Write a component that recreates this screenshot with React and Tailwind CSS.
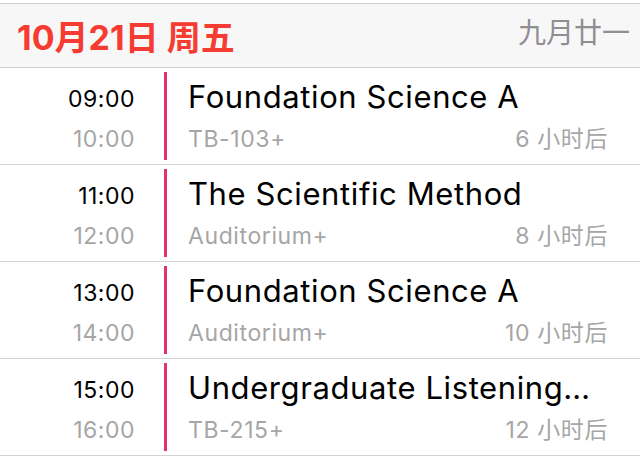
import React from "react";

const rows = [
  { s: "09:00", e: "10:00", t: "Foundation Science A", loc: "TB-103+", rel: "6 小时后" },
  { s: "11:00", e: "12:00", t: "The Scientific Method", loc: "Auditorium+", rel: "8 小时后" },
  { s: "13:00", e: "14:00", t: "Foundation Science A", loc: "Auditorium+", rel: "10 小时后" },
  { s: "15:00", e: "16:00", t: "Undergraduate Listening…", loc: "TB-215+", rel: "12 小时后" },
];

export default function App() {
  return (
    <div
      className="w-[640px] h-[457px] bg-white overflow-hidden"
      style={{ fontFamily: 'Inter, "Noto Sans CJK SC", sans-serif' }}
    >
      <div className="mt-[3px] h-[65px] border-y border-[#d0d0d4] bg-[#f7f7f7] flex justify-between px-[17px]">
        <div className="pt-[13px] text-[34px] leading-[42px] font-bold text-[#f63c32] tracking-[0px]">
          10月21日 周五
        </div>
        <div className="pt-[9px] text-[28px] leading-[40px] text-[#8e8e93] mr-[-7px]">
          九月廿一
        </div>
      </div>
      {rows.map((r, i) => (
        <div key={i} className="h-[97px] border-b border-[#d4d4d8] flex">
          <div className="w-[135px] shrink-0 flex flex-col items-end pt-[15px]">
            <div className="h-[32px] leading-[32px] text-[23px] tracking-[0.5px] text-black">{r.s}</div>
            <div className="mt-[8px] h-[32px] leading-[32px] text-[23px] tracking-[0.5px] text-[#a6a6a6]">{r.e}</div>
          </div>
          <div className="ml-[29px] py-[4px] flex">
            <div className="w-[3px] bg-[#e2336b]" />
          </div>
          <div className="ml-[21px] flex-1 pr-[32px] flex flex-col pt-[11px]">
            <div className="h-[36px] leading-[36px] text-[31px] tracking-[0.6px] text-black whitespace-nowrap">{r.t}</div>
            <div className="mt-[8px] h-[32px] leading-[32px] flex justify-between text-[23px] tracking-[0.6px] text-[#a6a6a6]">
              <span>{r.loc}</span>
              <span>{r.rel}</span>
            </div>
          </div>
        </div>
      ))}
    </div>
  );
}
